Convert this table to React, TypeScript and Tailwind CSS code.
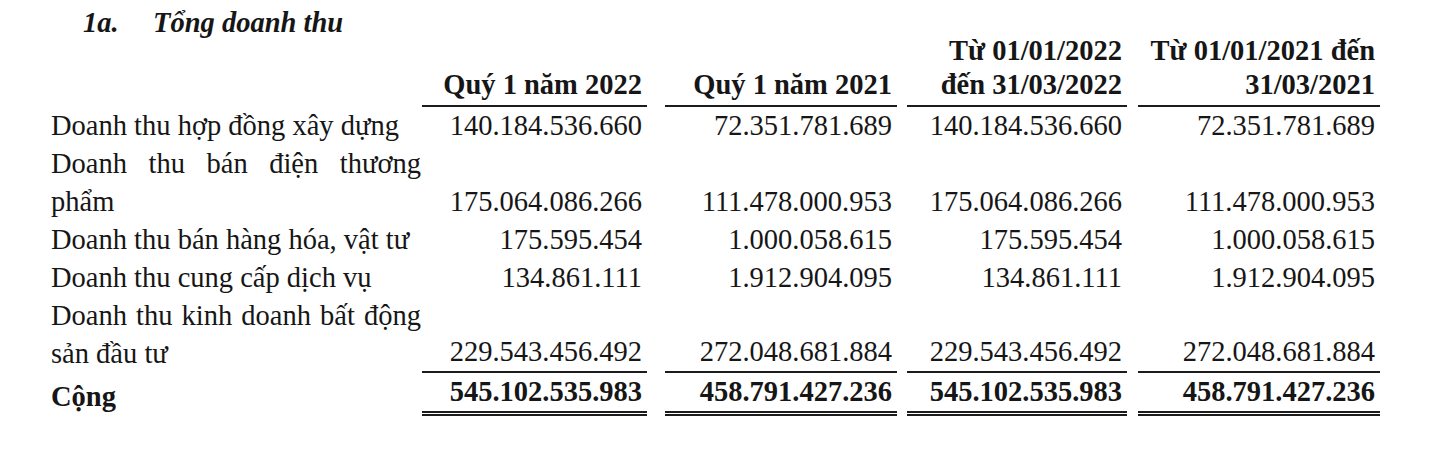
import React from "react";

const cols = [
  "w-[225px]",
  "ml-[18px] w-[232px]",
  "ml-[10px] w-[220px]",
  "ml-[11px] w-[242px]",
];

type Row = {
  label: string;
  values: string[];
  line?: "single" | "double";
  bold?: boolean;
};

const rows: Row[] = [
  {
    label: "Doanh thu hợp đồng xây dựng",
    values: ["140.184.536.660", "72.351.781.689", "140.184.536.660", "72.351.781.689"],
  },
  {
    label: "Doanh thu bán điện thương phẩm",
    values: ["175.064.086.266", "111.478.000.953", "175.064.086.266", "111.478.000.953"],
  },
  {
    label: "Doanh thu bán hàng hóa, vật tư",
    values: ["175.595.454", "1.000.058.615", "175.595.454", "1.000.058.615"],
  },
  {
    label: "Doanh thu cung cấp dịch vụ",
    values: ["134.861.111", "1.912.904.095", "134.861.111", "1.912.904.095"],
  },
  {
    label: "Doanh thu kinh doanh bất động sản đầu tư",
    values: ["229.543.456.492", "272.048.681.884", "229.543.456.492", "272.048.681.884"],
    line: "single",
  },
  {
    label: "Cộng",
    values: ["545.102.535.983", "458.791.427.236", "545.102.535.983", "458.791.427.236"],
    line: "double",
    bold: true,
  },
];

const headers = [
  ["Quý 1 năm 2022"],
  ["Quý 1 năm 2021"],
  ["Từ 01/01/2022", "đến 31/03/2022"],
  ["Từ 01/01/2021 đến", "31/03/2021"],
];

export default function App() {
  return (
    <div className="min-h-[452px] w-[1440px] bg-white text-[#161616] font-['Liberation_Serif','Times_New_Roman',serif] text-[28.5px]">
      {/* heading */}
      <div className="flex pl-[83px] pt-[4px] h-[34px] leading-[38px] font-bold italic">
        <span className="w-[70px]">1a.</span>
        <span>Tổng doanh thu</span>
      </div>

      <div className="pl-[51px]">
        {/* column headers */}
        <div className="flex items-end font-bold leading-[34px]">
          <div className="w-[370px] mr-[1px]" />
          {headers.map((h, i) => (
            <div key={i} className={`${cols[i]} border-b-2 border-[#1c1c1c] pr-[5px] pb-[3px] text-right`}>
              {h.map((l, j) => (
                <div key={j} className="whitespace-nowrap">
                  {l}
                </div>
              ))}
            </div>
          ))}
        </div>

        {/* data rows */}
        {rows.map((r) => (
          <div key={r.label} className={`flex items-end leading-[38px] ${r.bold ? "font-bold" : ""}`}>
            <div className="w-[370px] mr-[1px] text-justify">{r.label}</div>
            {r.values.map((v, i) => (
              <div
                key={i}
                className={`${cols[i]} pr-[5px] text-right whitespace-nowrap ${
                  r.line === "single"
                    ? "border-b-2 border-[#1c1c1c]"
                    : r.line === "double"
                    ? "border-b-[5px] border-double border-[#1c1c1c]"
                    : ""
                }`}
              >
                {v}
              </div>
            ))}
          </div>
        ))}
      </div>
    </div>
  );
}
